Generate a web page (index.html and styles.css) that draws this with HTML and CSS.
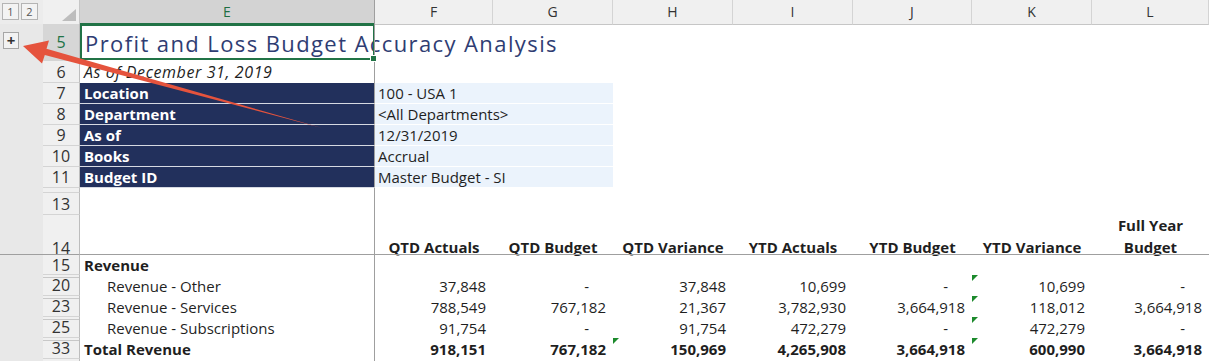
FILE: index.html
```html
<!DOCTYPE html>
<html lang="en">
<head>
    <meta charset="UTF-8">
    <title>Profit and Loss Budget Accuracy Analysis</title>
    <link rel="stylesheet" href="styles.css">
</head>
<body>
    <div class="sheet">
        <!-- column headers -->
        <div class="row hdr">
            <div class="outline levels"><span class="lvl">1</span><span class="lvl">2</span></div>
            <div class="corner"><span class="corner-tri"></span></div>
            <div class="colh active">E</div>
            <div class="colh f">F</div>
            <div class="colh">G</div>
            <div class="colh">H</div>
            <div class="colh">I</div>
            <div class="colh">J</div>
            <div class="colh">K</div>
            <div class="colh">L</div>
        </div>

        <div class="row r5">
            <div class="outline"><span class="expand">+</span></div>
            <div class="rh active mid">5</div>
            <div class="cell selected"><span class="title">Profit and Loss Budget Accuracy Analysis</span></div>
            <div class="cell f"></div>
        </div>

        <div class="row r6">
            <div class="outline"></div>
            <div class="rh mid">6</div>
            <div class="cell asof">As of December 31, 2019</div>
            <div class="cell f"></div>
        </div>

        <div class="row r21">
            <div class="outline"></div>
            <div class="rh mid">7</div>
            <div class="cell key">Location</div>
            <div class="cell f val">100 - USA 1</div>
        </div>
        <div class="row r21">
            <div class="outline"></div>
            <div class="rh mid">8</div>
            <div class="cell key">Department</div>
            <div class="cell f val">&lt;All Departments&gt;</div>
        </div>
        <div class="row r21">
            <div class="outline"></div>
            <div class="rh mid">9</div>
            <div class="cell key">As of</div>
            <div class="cell f val">12/31/2019</div>
        </div>
        <div class="row r21">
            <div class="outline"></div>
            <div class="rh mid">10</div>
            <div class="cell key">Books</div>
            <div class="cell f val">Accrual</div>
        </div>
        <div class="row r21">
            <div class="outline"></div>
            <div class="rh mid">11</div>
            <div class="cell key">Budget ID</div>
            <div class="cell f val">Master Budget - SI</div>
        </div>

        <div class="row r12">
            <div class="outline"></div>
            <div class="rh"></div>
            <div class="cell"></div>
            <div class="cell f"></div>
        </div>

        <div class="row r13">
            <div class="outline"></div>
            <div class="rh mid">13</div>
            <div class="cell"></div>
            <div class="cell f"></div>
        </div>

        <div class="row r14">
            <div class="outline"></div>
            <div class="rh">14</div>
            <div class="cell"></div>
            <div class="cell f head">QTD Actuals</div>
            <div class="cell head">QTD Budget</div>
            <div class="cell head">QTD Variance</div>
            <div class="cell head">YTD Actuals</div>
            <div class="cell head">YTD Budget</div>
            <div class="cell head">YTD Variance</div>
            <div class="cell head">Full Year<br>Budget</div>
        </div>

        <div class="row r21 freeze">
            <div class="outline"></div>
            <div class="rh mid">15</div>
            <div class="cell label bold">Revenue</div>
            <div class="cell f"></div>
            <div class="cell"></div>
            <div class="cell"></div>
            <div class="cell"></div>
            <div class="cell"></div>
            <div class="cell"></div>
            <div class="cell"></div>
        </div>

        <div class="row r21">
            <div class="outline"></div>
            <div class="rh mid gap">20</div>
            <div class="cell label sub">Revenue - Other</div>
            <div class="cell f num">37,848</div>
            <div class="cell dash">-</div>
            <div class="cell num">37,848</div>
            <div class="cell num">10,699</div>
            <div class="cell dash">-</div>
            <div class="cell num flag">10,699</div>
            <div class="cell dash">-</div>
        </div>
        <div class="row r21">
            <div class="outline"></div>
            <div class="rh mid gap">23</div>
            <div class="cell label sub">Revenue - Services</div>
            <div class="cell f num">788,549</div>
            <div class="cell num">767,182</div>
            <div class="cell num">21,367</div>
            <div class="cell num">3,782,930</div>
            <div class="cell num">3,664,918</div>
            <div class="cell num flag">118,012</div>
            <div class="cell num">3,664,918</div>
        </div>
        <div class="row r21">
            <div class="outline"></div>
            <div class="rh mid gap">25</div>
            <div class="cell label sub">Revenue - Subscriptions</div>
            <div class="cell f num">91,754</div>
            <div class="cell dash">-</div>
            <div class="cell num">91,754</div>
            <div class="cell num">472,279</div>
            <div class="cell dash">-</div>
            <div class="cell num flag">472,279</div>
            <div class="cell dash">-</div>
        </div>
        <div class="row r21 total">
            <div class="outline"></div>
            <div class="rh mid gap">33</div>
            <div class="cell label bold">Total Revenue</div>
            <div class="cell f num">918,151</div>
            <div class="cell num">767,182</div>
            <div class="cell num flag">150,969</div>
            <div class="cell num">4,265,908</div>
            <div class="cell num">3,664,918</div>
            <div class="cell num flag">600,990</div>
            <div class="cell num">3,664,918</div>
        </div>
        <div class="row r21">
            <div class="outline"></div>
            <div class="rh"></div>
            <div class="cell"></div>
            <div class="cell f"></div>
        </div>
    </div>

    <!-- annotation arrow pointing at the expand button -->
    <svg class="arrow" width="1209" height="361" viewBox="0 0 1209 361">
        <polygon points="23,46 49,40.5 46.5,48.8 322,128 44.8,55 42,63.5" fill="#e5533d"/>
    </svg>
</body>
</html>
```

FILE: styles.css
```css
body {
    margin: 0;
    background: #fff;
    position: relative;
    font-family: "Open Sans", "Liberation Sans", sans-serif;
    color: #1f1f1f;
    overflow: hidden;
}

.sheet {
    width: 1209px;
}

.row {
    display: grid;
    grid-template-columns: 43px 37px 294px 119px 120px 120px 120px 119px 120px 117px;
}

.hdr { height: 24px; }
.r5 { height: 37px; }
.r6 { height: 22px; }
.r21 { height: 21px; }
.r12 { height: 5px; overflow: hidden; }
.r13 { height: 22px; }
.r14 { height: 39px; }

/* outline (grouping) strip */
.outline {
    background: #e8e8e8;
    display: flex;
    align-items: flex-start;
}

.levels {
    gap: 2px;
    padding: 3px 0 0 2px;
    background: #ececec;
    border-bottom: 1px solid #d0d0d0;
    box-sizing: border-box;
}

.lvl {
    width: 15px;
    height: 15px;
    border: 1px solid #b4b4b4;
    background: #f3f3f3;
    font-size: 11px;
    line-height: 15px;
    text-align: center;
    color: #555;
}

.expand {
    margin: 8px 0 0 3px;
    width: 14px;
    height: 15px;
    border: 1px solid #a6a6a6;
    background: #f2f2f2;
    font-size: 15px;
    font-weight: bold;
    line-height: 14px;
    text-align: center;
    color: #333;
}

/* column headers */
.corner {
    background: #f0f0f0;
    border-bottom: 1px solid #c6c6c6;
    border-right: 1px solid #c6c6c6;
    box-sizing: border-box;
    display: flex;
    align-items: flex-end;
    justify-content: flex-end;
    padding: 0 3px 3px 0;
}

.corner-tri {
    width: 0;
    height: 0;
    border-left: 14px solid transparent;
    border-bottom: 12px solid #bdbdbd;
}

.colh {
    background: #f0f0f0;
    border-right: 1px solid #d4d4d4;
    border-bottom: 1px solid #c6c6c6;
    box-sizing: border-box;
    font-size: 14px;
    line-height: 23px;
    text-align: center;
    color: #333;
}

.colh.active {
    background: #d3d3d3;
    color: #1e6e42;
    border-bottom: 2px solid #217346;
    border-right: none;
}

.colh.f {
    border-left: 1px solid #9f9f9f;
}

/* row headers */
.rh {
    background: #f0f0f0;
    border-right: 1px solid #bdbdbd;
    border-bottom: 1px solid #d4d4d4;
    box-sizing: border-box;
    font-size: 16px;
    display: flex;
    align-items: flex-end;
    justify-content: center;
    line-height: 20px;
    color: #333;
    overflow: hidden;
}

.rh.mid { align-items: center; }

.r14 .rh {
    border-bottom: none;
    padding-bottom: 1px;
}

.rh.active {
    background: #d6d6d6;
    color: #217346;
}

/* hidden rows above: double line */
.rh.gap {
    background: linear-gradient(#c8c8c8, #c8c8c8) 0 2px / 100% 1px no-repeat #f0f0f0;
}

/* cells */
.cell {
    box-sizing: border-box;
    font-size: 15px;
    line-height: 20px;
    display: flex;
    align-items: center;
    white-space: nowrap;
    position: relative;
}

.cell.f {
    border-left: 1px solid #9f9f9f;
}

/* frozen panes split line */
.freeze > div {
    border-top: 1px solid #9f9f9f;
}

.selected::after {
    content: '';
    position: absolute;
    top: 0;
    left: 0;
    right: -1px;
    bottom: 1px;
    border: 2px solid #217346;
}

.selected::before {
    content: '';
    position: absolute;
    right: -3px;
    bottom: -1px;
    width: 5px;
    height: 5px;
    background: #217346;
    border: 1px solid #fff;
    z-index: 2;
}

.title {
    padding-left: 5px;
    font-size: 22px;
    letter-spacing: 1.4px;
    color: #2f3d73;
}

.asof {
    padding-left: 4px;
    font-style: italic;
    font-size: 16px;
    letter-spacing: 0.6px;
}

.key {
    background: #22305c;
    color: #fff;
    font-weight: bold;
    padding-left: 4px;
    border-bottom: 1px solid #d6d9e2;
}

.val {
    grid-column: span 2;
    background: #ebf3fc;
    padding-left: 3px;
    border-bottom: 1px solid #fff;
}

.head {
    font-weight: bold;
    justify-content: center;
    align-items: flex-end;
    text-align: center;
    line-height: 21.5px;
    padding-bottom: 1px;
}

.label { padding-left: 4px; }
.label.sub { padding-left: 27px; }
.bold, .total .cell { font-weight: bold; }

.num {
    justify-content: flex-end;
    padding-right: 7px;
}

.dash {
    justify-content: flex-end;
    padding-right: 24px;
}

/* green error-check marker */
.flag::before {
    content: '';
    position: absolute;
    top: 0;
    left: 0;
    border-top: 6px solid #1c8a2c;
    border-right: 6px solid transparent;
}

.arrow {
    position: absolute;
    top: 0;
    left: 0;
    pointer-events: none;
}
```
